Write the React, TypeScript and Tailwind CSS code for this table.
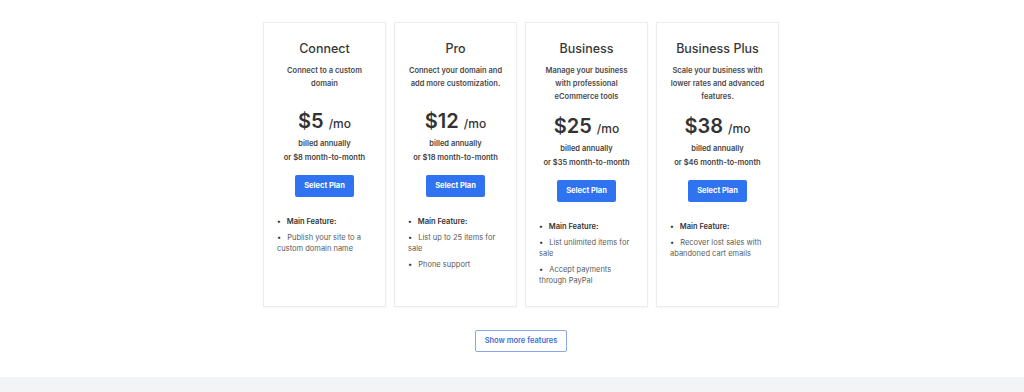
import React from 'react';

interface Plan {
  name: string;
  desc: string[];
  price: string;
  monthly: string;
  features: string[][];
}

const plans: Plan[] = [
  {
    name: 'Connect',
    desc: ['Connect to a custom', 'domain'],
    price: '$5',
    monthly: 'or $8 month-to-month',
    features: [['Publish your site to a', 'custom domain name']],
  },
  {
    name: 'Pro',
    desc: ['Connect your domain and', 'add more customization.'],
    price: '$12',
    monthly: 'or $18 month-to-month',
    features: [['List up to 25 items for', 'sale'], ['Phone support']],
  },
  {
    name: 'Business',
    desc: ['Manage your business', 'with professional', 'eCommerce tools'],
    price: '$25',
    monthly: 'or $35 month-to-month',
    features: [['List unlimited items for', 'sale'], ['Accept payments', 'through PayPal']],
  },
  {
    name: 'Business Plus',
    desc: ['Scale your business with', 'lower rates and advanced', 'features.'],
    price: '$38',
    monthly: 'or $46 month-to-month',
    features: [['Recover lost sales with', 'abandoned cart emails']],
  },
];

function PlanCard({ plan }: { plan: Plan }) {
  return (
    <div className="flex w-[123px] flex-col border border-[#ececec] bg-white px-[13px] pb-[20px] pt-[18px] shadow-[0_1px_2px_rgba(0,0,0,0.04)]">
      <h3 className="text-center text-[12.5px] font-medium leading-[16px] text-[#383838]">{plan.name}</h3>
      <p className="mt-[7px] min-h-[34px] text-center text-[7.5px] font-semibold leading-[13px] text-[#4a4a4a]">
        {plan.desc.map((line) => (
          <span key={line} className="block whitespace-nowrap">
            {line}
          </span>
        ))}
      </p>
      <div className="mt-[10px] flex items-baseline justify-center gap-[5px] text-[#333]">
        <span className="text-[20px] font-semibold leading-[26px]">{plan.price}</span>
        <span className="text-[12px] font-medium">/mo</span>
      </div>
      <p className="mt-[3px] text-center text-[7.5px] font-semibold leading-[14px] text-[#3f3f3f]">
        <span className="block">billed annually</span>
        <span className="block whitespace-nowrap">{plan.monthly}</span>
      </p>
      <button className="mx-auto mt-[10px] h-[22px] w-[59px] rounded-[2px] bg-[#2f73f0] text-[7.5px] font-bold text-white">
        Select Plan
      </button>
      <ul className="mt-[19px] flex flex-col gap-[5px] text-[7.5px] leading-[11px] text-[#5a5a5a]">
        <li className="font-semibold text-[#333]">
          <span className="mr-[6px]">•</span>Main Feature:
        </li>
        {plan.features.map((lines) => (
          <li key={lines[0]}>
            <span className="mr-[6px] text-[#333]">•</span>
            {lines[0]}
            {lines[1] && <span className="block">{lines[1]}</span>}
          </li>
        ))}
      </ul>
    </div>
  );
}

export default function App() {
  return (
    <div className="flex h-[392px] w-full flex-col bg-white font-['Inter',sans-serif]">
      <div className="flex justify-center pl-[18px] pt-[22px]">
        <div className="flex items-stretch gap-[8px]">
          {plans.map((p) => (
            <PlanCard key={p.name} plan={p} />
          ))}
        </div>
      </div>
      <div className="flex justify-center pl-[18px] pt-[23px]">
        <button className="h-[22px] w-[92px] rounded-[2px] border border-[#8aa6e4] bg-white text-[7.5px] font-semibold text-[#3d6fd6]">
          Show more features
        </button>
      </div>
      <div className="mt-auto h-[15px] bg-[#f3f4f5]" />
    </div>
  );
}
